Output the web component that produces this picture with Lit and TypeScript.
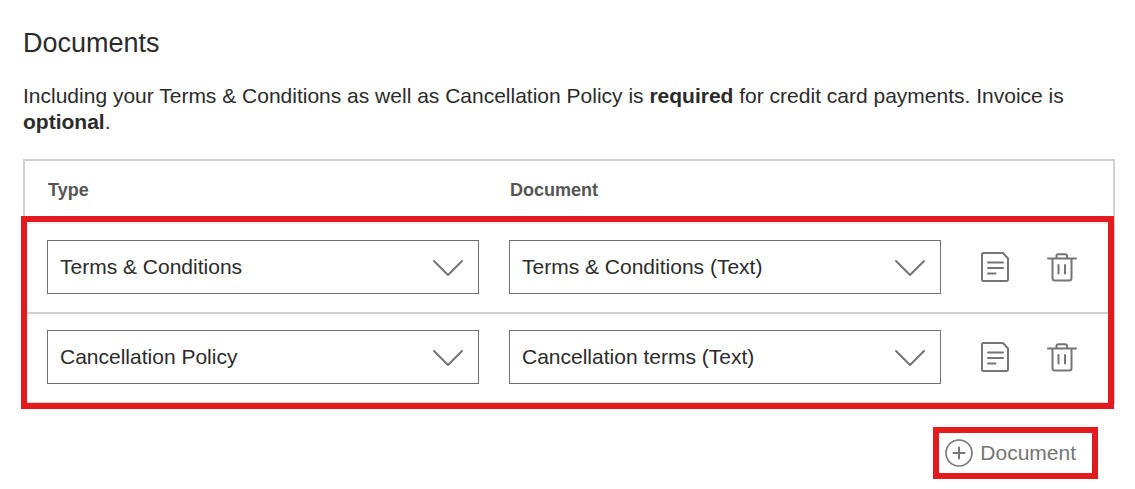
import { LitElement, html, css } from "lit";
import { customElement, state } from "lit/decorators.js";

interface DocumentRow {
  type: string;
  document: string;
}

@customElement("app-root")
export class AppRoot extends LitElement {
  static styles = css`
    :host {
      display: block;
      box-sizing: border-box;
      padding: 24px 20px 10px 23px;
      font-family: "Liberation Sans", Arial, sans-serif;
      font-size: 21px;
      line-height: 26px;
      color: #2b2b2b;
      background: #fff;
    }
    .title {
      margin: 0;
      font-size: 27px;
      line-height: 38px;
      font-weight: 400;
    }
    .intro {
      margin: 21px 0 24px;
    }
    .documents {
      width: 100%;
      table-layout: fixed;
      border: 2px solid #d0d0d0;
      border-collapse: separate;
      border-spacing: 0;
    }
    .head,
    .cell {
      box-sizing: border-box;
      padding: 0 8px 2px 22px;
      text-align: left;
    }
    .head {
      height: 61px;
      padding: 0 8px 4px 23px;
      font-size: 18px;
      font-weight: 700;
      color: #555;
    }
    .actions-head {
      width: 164px;
    }
    .cell {
      height: 90px;
      border-top: 2px solid #d0d0d0;
    }
    .row:first-child .cell {
      border-top-color: #eee;
    }
    .rows {
      position: relative;
    }
    .rows::after {
      content: "";
      position: absolute;
      inset: -6px -1px -7px -4px;
      border: 6px solid #e31b1f;
      pointer-events: none;
    }
    .select {
      display: grid;
      align-items: center;
    }
    .select select {
      grid-area: 1 / 1;
      box-sizing: border-box;
      width: 100%;
      height: 54px;
      padding: 0 48px 0 12px;
      appearance: none;
      border: 1px solid #707070;
      border-radius: 0;
      background: #fff;
      font: inherit;
      color: inherit;
    }
    .icon {
      display: block;
      fill: none;
      stroke: #757575;
      stroke-width: 2;
      stroke-linecap: round;
      stroke-linejoin: round;
    }
    .chevron {
      grid-area: 1 / 1;
      justify-self: end;
      margin: 2px 15px 0 0;
      pointer-events: none;
    }
    .actions {
      display: flex;
      gap: 37px;
      padding-left: 9px;
    }
    .icon-button,
    .add {
      padding: 0;
      border: 0;
      background: none;
      font: inherit;
      color: #757575;
      cursor: pointer;
    }
    .footer {
      display: flex;
      justify-content: flex-end;
      margin: 23px 17px 0 0;
    }
    .add {
      display: flex;
      align-items: center;
      gap: 7px;
      height: 52px;
      padding: 0 16px 0 6px;
      border: 6px solid #e31b1f;
    }
  `;

  @state() private rows: DocumentRow[] = [
    { type: "Terms & Conditions", document: "Terms & Conditions (Text)" },
    { type: "Cancellation Policy", document: "Cancellation terms (Text)" },
  ];

  private addRow() {
    this.rows = [...this.rows, { type: "Invoice", document: "Invoice (Text)" }];
  }

  private removeRow(row: DocumentRow) {
    this.rows = this.rows.filter((item) => item !== row);
  }

  private renderSelect(label: string, value: string) {
    return html`<div class="select">
      <select aria-label=${label}>
        <option>${value}</option>
      </select>
      <svg class="icon chevron" width="32" height="18" viewBox="0 0 32 18" aria-hidden="true">
        <path d="M2 2 16 16 30 2" />
      </svg>
    </div>`;
  }

  private renderRow(row: DocumentRow) {
    return html`<tr class="row">
      <td class="cell">${this.renderSelect("Type", row.type)}</td>
      <td class="cell">${this.renderSelect("Document", row.document)}</td>
      <td class="cell">
        <div class="actions">
          <button class="icon-button" aria-label="View document">
            <svg class="icon" width="30" height="32" viewBox="0 0 30 32">
              <path d="M4 2H23L28 7.500V28.500a1.500 1.500 0 0 1-1.500 1.500H3.500A1.500 1.500 0 0 1 2 28.500V3.500A1.500 1.500 0 0 1 3.500 2Z" />
              <path d="M8 11.500H23M8 17H23M8 22.500H15.500" />
            </svg>
          </button>
          <button
            class="icon-button"
            aria-label="Delete document"
            @click=${() => this.removeRow(row)}
          >
            <svg class="icon" width="30" height="32" viewBox="0 0 30 32">
              <path d="M1 7.500H29M5.500 7.500V27a2.500 2.500 0 0 0 2.500 2.500H22a2.500 2.500 0 0 0 2.500-2.500V7.500" />
              <path d="M9.500 7V5a1.800 1.800 0 0 1 1.800-1.800H18.200a1.800 1.800 0 0 1 1.800 1.800V7M11.500 14V22.500M18 14V22.500" />
            </svg>
          </button>
        </div>
      </td>
    </tr>`;
  }

  render() {
    return html`
      <h1 class="title">Documents</h1>
      <p class="intro">
        Including your Terms &amp; Conditions as well as Cancellation Policy is
        <strong>required</strong> for credit card payments. Invoice is
        <strong>optional</strong>.
      </p>
      <table class="documents">
        <thead>
          <tr>
            <th class="head" scope="col">Type</th>
            <th class="head" scope="col">Document</th>
            <td class="head actions-head"></td>
          </tr>
        </thead>
        <tbody class="rows">
          ${this.rows.map((row) => this.renderRow(row))}
        </tbody>
      </table>
      <div class="footer">
        <button class="add" @click=${this.addRow}>
          <svg class="icon" width="28" height="28" viewBox="0 0 28 28" aria-hidden="true">
            <circle cx="14" cy="14" r="13" stroke-width="1.600" />
            <path d="M14 8.500V19.500M8.500 14H19.500" />
          </svg>
          Document
        </button>
      </div>
    `;
  }
}
